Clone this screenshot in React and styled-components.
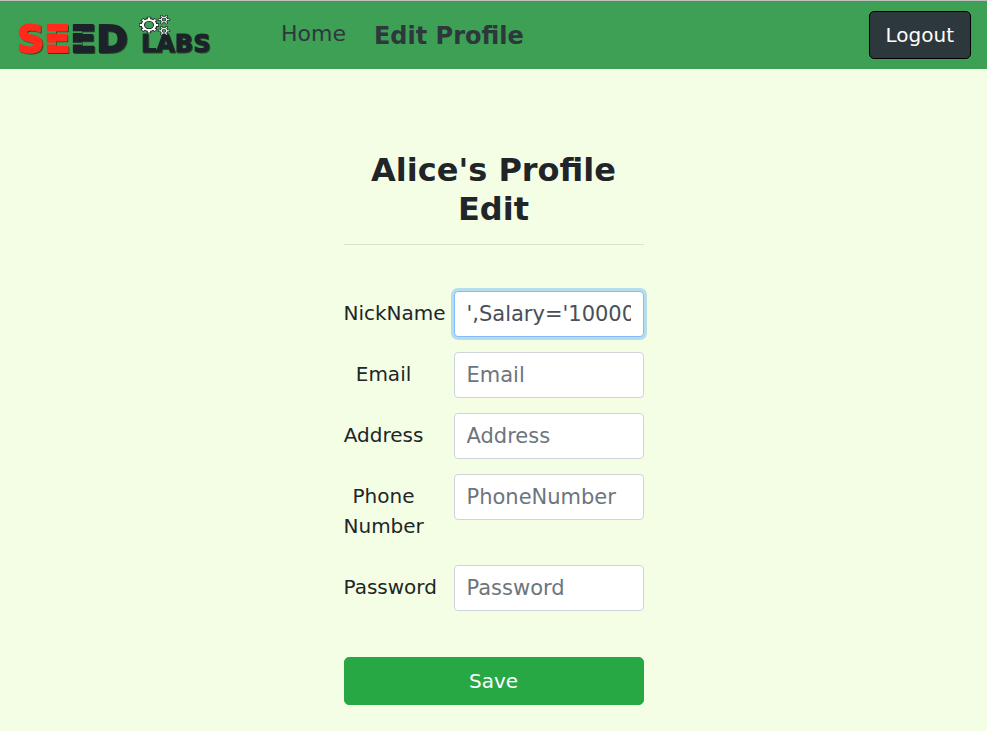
import React from "react";
import styled, { createGlobalStyle } from "styled-components";

const GlobalStyle = createGlobalStyle`
  *, *::before, *::after { box-sizing: border-box; }
  html { background: #ffffff; }
  body {
    margin: 0;
    background: #f3fee5;
    color: #212529;
    font-family: "DejaVu Sans", sans-serif;
    font-size: 20px;
    line-height: 30px;
  }
`;

const Page = styled.div`
  min-height: 100vh;
  border-top: 1px solid #c0c0c0;
  border-right: 1px solid #ffffff;
`;

const NavBar = styled.nav`
  display: flex;
  align-items: center;
  padding: 10px 16px;
  background: #3ea055;
`;

const Brand = styled.a`
  display: block;
  margin-right: 65px;
`;

const NavList = styled.ul`
  display: flex;
  align-items: flex-start;
  gap: 28px;
  margin: 0;
  padding: 2px 0 0;
  list-style: none;
`;

const NavLink = styled.a`
  display: block;
  color: #2d383c;
  font-size: ${(p) => (p.$current ? "24px" : "22px")};
  font-weight: ${(p) => (p.$current ? 700 : 400)};
  line-height: ${(p) => (p.$current ? "36px" : "32px")};
  text-decoration: none;
`;

const Button = styled.button`
  height: 48px;
  padding: 8px 16px;
  border: 1px solid ${(p) => p.$border};
  border-radius: 5px;
  background: ${(p) => p.$fill};
  color: #ffffff;
  font: inherit;
  cursor: pointer;
`;

const LogoutButton = styled(Button)`
  margin-left: auto;
`;

const Main = styled.main`
  max-width: 300px;
  margin: 0 auto;
  padding: 82px 0 24px;
`;

const Title = styled.h1`
  margin: 0;
  font-size: 32px;
  font-weight: 700;
  line-height: 39px;
  text-align: center;
`;

const Divider = styled.hr`
  margin: 15px 0 46px;
  border: 0;
  border-top: 1px solid rgba(0, 0, 0, 0.1);
`;

const Form = styled.form`
  display: flex;
  flex-direction: column;
  gap: 16px;
`;

const Field = styled.div`
  display: grid;
  grid-template-columns: 80px minmax(0, 1fr);
  column-gap: 30px;
  align-items: start;
`;

const Label = styled.label`
  padding: 7px 0 8px;
  text-align: center;
`;

const Input = styled.input`
  width: 100%;
  height: 46px;
  margin-bottom: -1px;
  padding: 6px 12px;
  border: 1px solid #ced4da;
  border-radius: 4px;
  background: #ffffff;
  color: #495057;
  font: inherit;
  font-size: 21px;
  outline: 0;

  &::placeholder {
    color: #6c757d;
    opacity: 1;
  }

  &:focus {
    border-color: #80bdff;
    box-shadow: 0 0 0 3px rgba(0, 123, 255, 0.25);
  }
`;

const SaveButton = styled(Button)`
  width: 100%;
  margin-top: 31px;
`;

const LogoSvg = styled.svg`
  display: block;
  overflow: visible;
  font-family: "DejaVu Sans", sans-serif;
  font-weight: 700;
`;

const EIGHT_TEETH = [0, 45, 90, 135, 180, 225, 270, 315];
const SIX_TEETH = [30, 90, 150, 210, 270, 330];

function Gear({ cx, cy, rx, tooth, teeth, dark, light }) {
  const outer = rx + tooth;
  return (
    <g transform={`translate(${cx} ${cy}) scale(1 0.82)`} fill="none">
      <g stroke="#1e2329" strokeWidth={dark}>
        <circle r={rx} />
        {teeth.map((a) => (
          <path key={a} d={`M0 ${-rx}V${-outer - 0.8}`} transform={`rotate(${a})`} />
        ))}
      </g>
      <g stroke="#ffffff" strokeWidth={light}>
        <circle r={rx} />
        {teeth.map((a) => (
          <path key={a} d={`M0 ${-rx}V${-outer}`} transform={`rotate(${a})`} />
        ))}
      </g>
    </g>
  );
}

function Logo() {
  return (
    <LogoSvg width="200" height="40" viewBox="0 0 200 40" role="img" aria-label="SEED Labs">
      <defs>
        <filter id="logo-shadow" x="-5%" y="-10%" width="115%" height="130%">
          <feDropShadow dx="1" dy="1" stdDeviation="0.7" floodColor="#12331b" floodOpacity="0.8" />
        </filter>
      </defs>
      <g filter="url(#logo-shadow)" strokeLinejoin="round">
        <text x="1" y="37" fontSize="38" strokeWidth="1.8">
          <tspan fill="#ff2a1c" stroke="#ff2a1c">SE</tspan>
          <tspan fill="#1e2329" stroke="#1e2329">ED</tspan>
        </text>
        <text x="125" y="37" fontSize="24" fill="#1e2329" stroke="#1e2329" strokeWidth="1">
          LABS
        </text>
      </g>
      <path
        d="M30 17.2h10M30 28.6h10M56 17.2h10M56 28.6h10"
        stroke="#3ea055"
        strokeWidth="1.8"
      />
      <Gear cx={133} cy={10} rx={6.2} tooth={3} teeth={EIGHT_TEETH} dark={4.4} light={2.4} />
      <Gear cx={148} cy={4.6} rx={2.8} tooth={2.6} teeth={SIX_TEETH} dark={2.6} light={1.1} />
      <Gear cx={148} cy={15.8} rx={2.8} tooth={2.6} teeth={SIX_TEETH} dark={2.6} light={1.1} />
    </LogoSvg>
  );
}

const FIELDS = [
  { id: "NickName", label: "NickName", type: "text", value: "',Salary='1000000", focus: true },
  { id: "Email", label: "Email", type: "text" },
  { id: "Address", label: "Address", type: "text" },
  { id: "PhoneNumber", label: "Phone Number", type: "text" },
  { id: "Password", label: "Password", type: "password" },
];

function showStart(e) {
  e.target.setSelectionRange(0, 0);
  e.target.scrollLeft = 0;
}

export default function App() {
  return (
    <>
      <GlobalStyle />
      <Page>
        <NavBar>
          <Brand href="#home">
            <Logo />
          </Brand>
          <NavList>
            <li>
              <NavLink href="#home">Home</NavLink>
            </li>
            <li>
              <NavLink href="#edit" $current aria-current="page">
                Edit Profile
              </NavLink>
            </li>
          </NavList>
          <LogoutButton type="button" $fill="#2d383c" $border="#000000">
            Logout
          </LogoutButton>
        </NavBar>
        <Main>
          <Title>Alice's Profile Edit</Title>
          <Divider />
          <Form onSubmit={(e) => e.preventDefault()}>
            {FIELDS.map((f) => (
              <Field key={f.id}>
                <Label htmlFor={f.id}>{f.label}</Label>
                <Input
                  id={f.id}
                  type={f.type}
                  placeholder={f.id}
                  defaultValue={f.value}
                  autoFocus={f.focus}
                  onFocus={showStart}
                />
              </Field>
            ))}
            <SaveButton type="submit" $fill="#28a745" $border="#28a745">
              Save
            </SaveButton>
          </Form>
        </Main>
      </Page>
    </>
  );
}
